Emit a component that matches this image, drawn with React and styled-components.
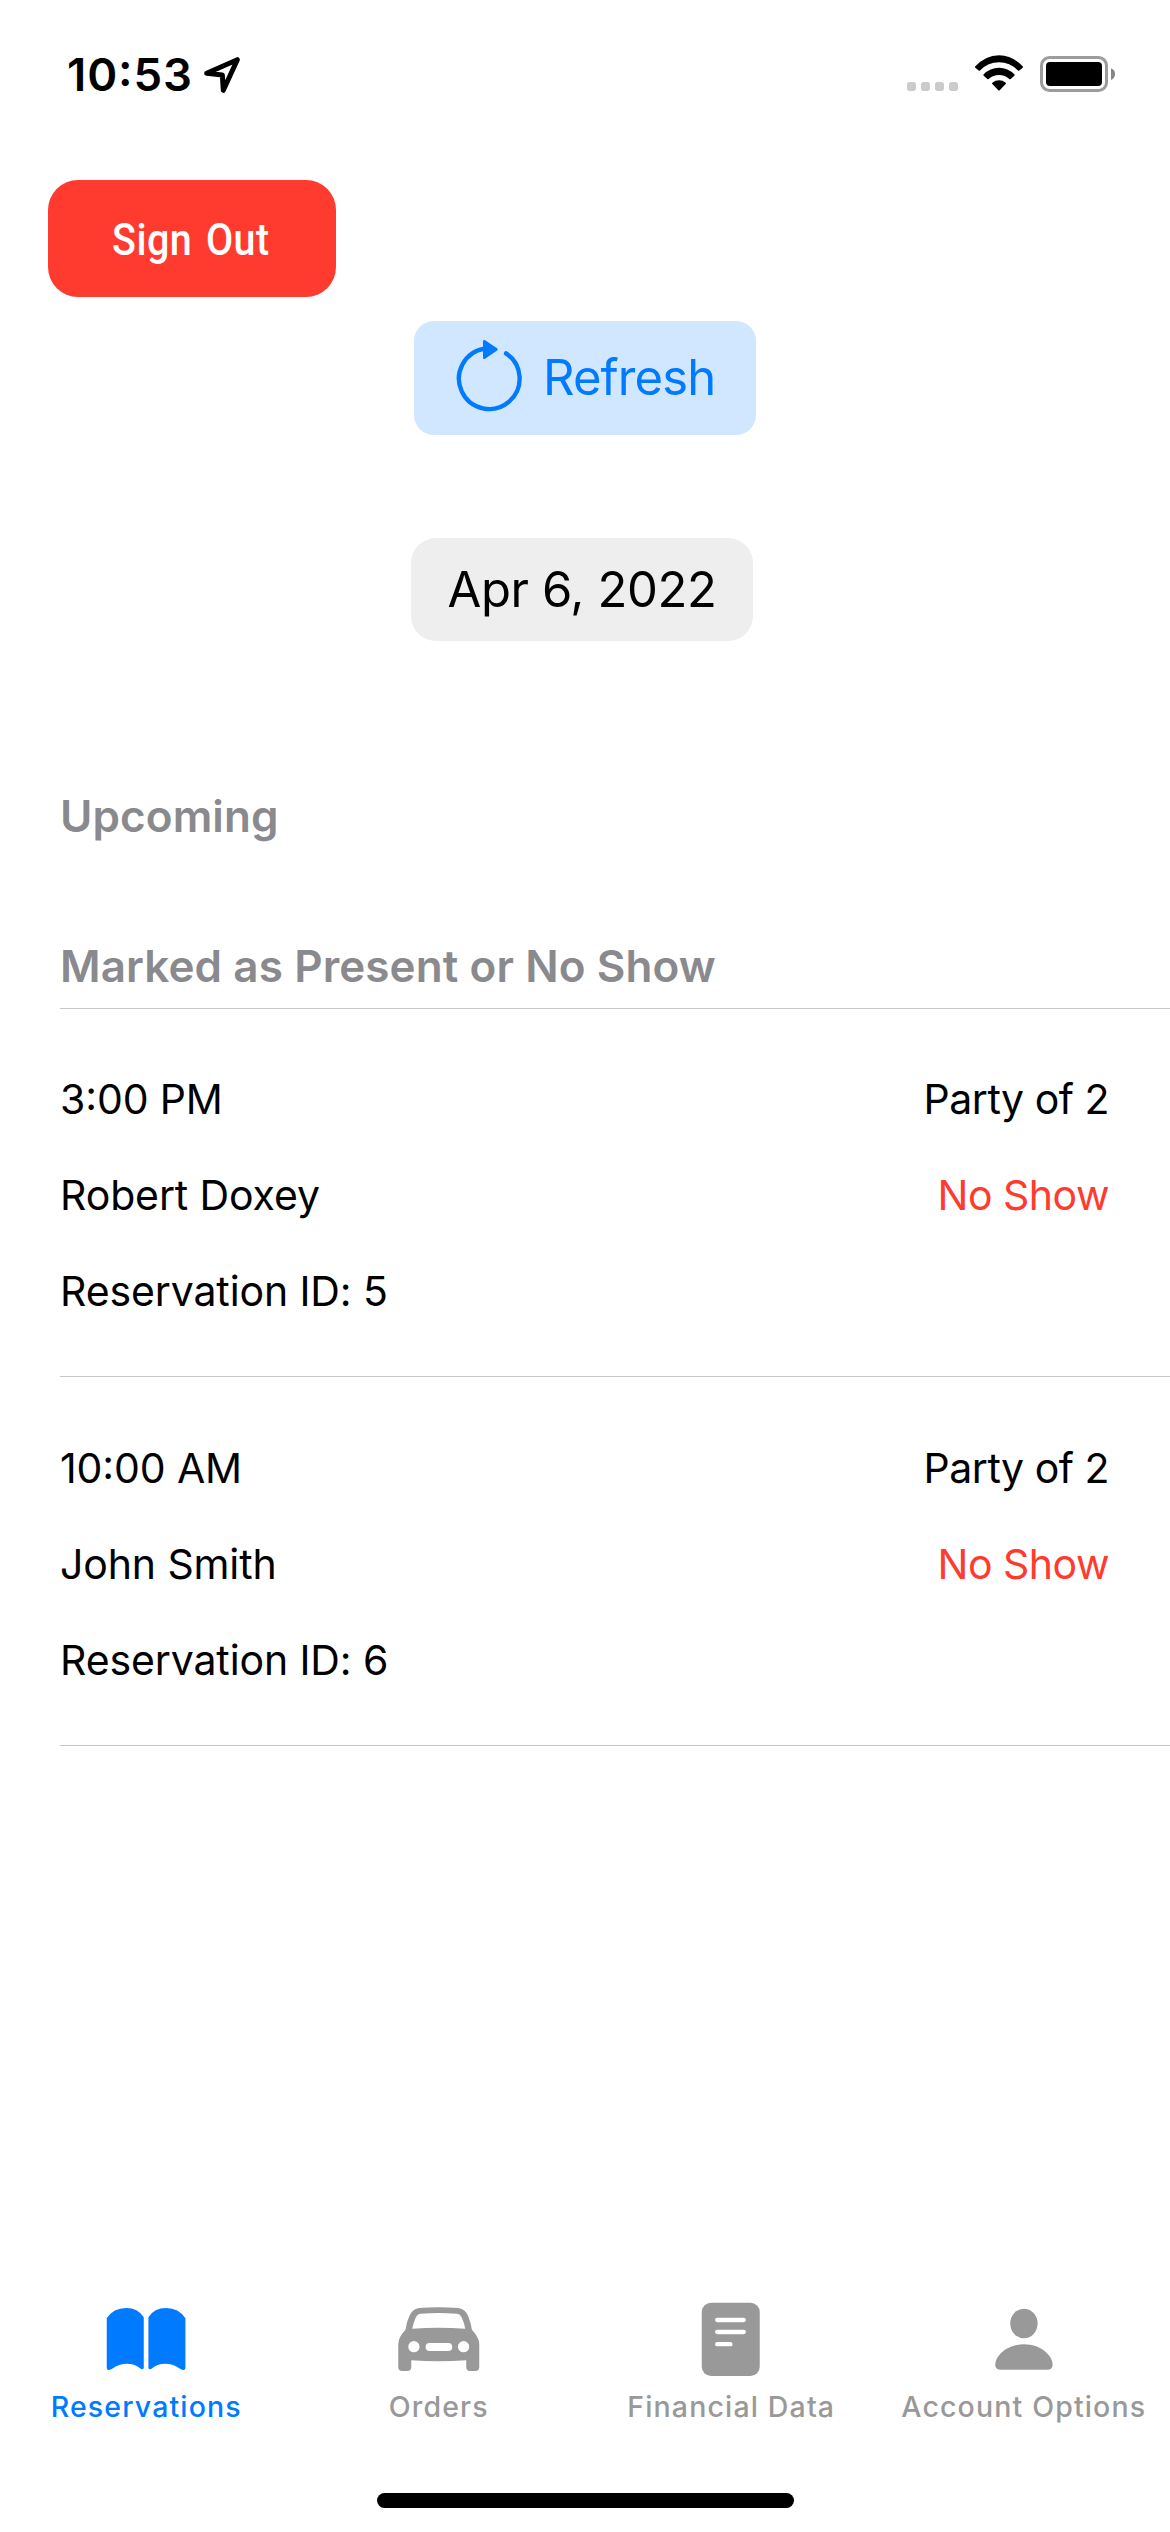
import React from "react";
import styled, { createGlobalStyle } from "styled-components";

const GlobalStyle = createGlobalStyle`
  * { box-sizing: border-box; }
  body {
    margin: 0;
    background: #ffffff;
    color: #000000;
    font-family: Inter, "Liberation Sans", sans-serif;
  }
`;

const Screen = styled.div`
  width: 1170px;
  height: 2532px;
  display: flex;
  flex-direction: column;
  background: #ffffff;
  overflow: hidden;
`;

const StatusBar = styled.header`
  height: 149px;
  padding: 0 54px 0 67px;
  display: flex;
  align-items: center;
  justify-content: space-between;
`;

const StatusGroup = styled.div`
  display: flex;
  align-items: center;
  gap: ${(p) => p.$gap}px;
`;

const Clock = styled.span`
  width: 127px;
  font-size: 45.5px;
  font-weight: 600;
  font-feature-settings: "case";
  line-height: 56px;
  letter-spacing: 0.9px;
  white-space: nowrap;
`;

const Glyph = styled.svg`
  display: block;
  flex: none;
  width: ${(p) => p.$w}px;
  height: ${(p) => p.$h}px;
`;

const Actions = styled.section`
  padding: 31px 0 0 48px;
  height: 172px;
`;

const SignOutButton = styled.button`
  width: 288px;
  height: 117px;
  padding: 2px 3px 0 0;
  border: 0;
  border-radius: 30px;
  background: #ff3b30;
  color: #ffffff;
  font-family: Roboto, sans-serif;
  font-size: 44.5px;
  font-weight: 500;
  line-height: 56px;
  letter-spacing: 0.5px;
  word-spacing: 4px;
`;

const CondensedLabel = styled.span`
  display: inline-block;
  transform: scaleX(0.887);
`;

const RefreshButton = styled.button`
  align-self: center;
  width: 342px;
  height: 114px;
  padding: 0 0 0 42px;
  display: flex;
  align-items: center;
  gap: 20px;
  border: 0;
  border-radius: 20px;
  background: #d1e7ff;
  color: #007aff;
  font-family: inherit;
  font-size: 49px;
  line-height: 60px;
  letter-spacing: -0.9px;
`;

const DateField = styled.div`
  align-self: center;
  width: 342px;
  height: 103px;
  margin: 103px 6px 0 0;
  display: flex;
  align-items: center;
  justify-content: center;
  border-radius: 25px;
  background: #eeeeef;
  font-size: 49px;
  line-height: 60px;
  letter-spacing: -0.4px;
`;

const List = styled.main`
  flex: 1;
  padding: 130px 0 0 60px;
`;

const SectionTitle = styled.h2`
  height: ${(p) => (p.$ruled ? 88 : 150)}px;
  margin: 0;
  padding-top: 15px;
  border-bottom: ${(p) => (p.$ruled ? "1px solid #c6c6c8" : "0")};
  color: #8a8a8e;
  font-size: 44px;
  font-weight: 600;
  line-height: 60px;
  letter-spacing: 0.1px;
`;

const Reservation = styled.article`
  padding: 43px 61px 37px 0;
  border-bottom: 1px solid #c6c6c8;
  display: flex;
  justify-content: space-between;
  font-size: 41px;
  line-height: 96px;

  &:first-of-type { padding-top: 42px; }
`;

const Details = styled.div`
  display: flex;
  flex-direction: column;
  align-items: ${(p) => (p.$end ? "flex-end" : "flex-start")};
  letter-spacing: ${(p) => (p.$end ? -0.5 : -0.12)}px;
`;

const Time = styled.span`
  font-feature-settings: "case";
`;

const Status = styled.span`
  color: #ff3b30;
`;

const TabBar = styled.nav`
  height: 193px;
  display: grid;
  grid-template-columns: repeat(4, 1fr);
`;

const Tab = styled.a`
  display: flex;
  flex-direction: column;
  align-items: center;
  gap: 11px;
  color: ${(p) => (p.$active ? "#007aff" : "#999999")};
  font-size: 28.5px;
  font-weight: 500;
  line-height: 36px;
  letter-spacing: 1.15px;
  white-space: nowrap;
`;

const HomeIndicator = styled.div`
  align-self: center;
  width: 417px;
  height: 15px;
  margin-bottom: 24px;
  border-radius: 8px;
  background: #000000;
`;

const LocationIcon = () => (
  <Glyph $w={37} $h={41} viewBox="492 72 111 123" fill="none" stroke="#000" strokeWidth="15" strokeLinejoin="round">
    <path d="M500 130 L592 89 L550 181 L547 135 Z" />
  </Glyph>
);

const CellularDots = () => (
  <Glyph $w={53} $h={41} viewBox="78 72 159 123" fill="#cbcbcb">
    {[81, 123, 165, 207].map((x) => (
      <rect key={x} x={x} y="156" width="27" height="27" rx="8" />
    ))}
  </Glyph>
);

const WifiIcon = () => (
  <Glyph $w={50} $h={41} viewBox="282 72 150 123" fill="#000">
    <path d="M286 109 Q316 76 357 75.500 Q398 76 428 109 Q430 111 428 113 L417 122 Q415 123 413 121 Q390 97 357 97 Q324 97 301 121 Q299 123 297 122 L286 113 Q284 111 286 109 Z" />
    <path d="M311 133 Q330 113 357 113 Q384 113 403 133 Q405 135 403 137 L392 147 Q390 149 388 147 Q375 135 357 135 Q339 135 326 147 Q324 149 322 147 L311 137 Q309 135 311 133 Z" />
    <path d="M337 158 Q346 151 357 151 Q368 151 377 158 Q379 160 377 162 L359 181 Q357 183 355 181 L337 162 Q335 160 337 158 Z" />
  </Glyph>
);

const BatteryIcon = () => (
  <Glyph $w={77} $h={41} viewBox="477 72 231 123">
    <rect x="484.500" y="82.500" width="195" height="99" rx="24" fill="none" stroke="#9c9c9c" strokeWidth="9" />
    <rect x="498" y="96" width="168" height="72" rx="12" fill="#000" />
    <path d="M693 115 Q705 120 705 132 Q705 144 693 150 Z" fill="#858585" />
  </Glyph>
);

const RefreshIcon = () => (
  <Glyph $w={67} $h={80} viewBox="168 84 201 240">
    <path d="M318 130 A91 91 0 1 1 254 116" fill="none" stroke="#007aff" strokeWidth="13" strokeLinecap="round" />
    <path d="M253 94 L289 118 L253 143 Z" fill="#007aff" stroke="#007aff" strokeWidth="8" strokeLinejoin="round" />
  </Glyph>
);

const BookIcon = () => (
  <Glyph $w={90} $h={78} viewBox="213.75 60 270 234" fill="currentColor">
    <path d="M231 115 Q251 84 289 84 Q325 84 342 112 L342 263 Q341 269 334 267 Q316 251 292 251 Q267 251 246 267 Q232 274 231 264 Z" />
    <path d="M356 112 Q373 84 409 84 Q447 84 467 115 L467 264 Q466 274 452 267 Q431 251 406 251 Q382 251 364 267 Q357 269 356 263 Z" />
  </Glyph>
);

const CarIcon = () => (
  <Glyph $w={90} $h={78} viewBox="161.25 60 270 234" fill="currentColor">
    <path
      fillRule="evenodd"
      d="M236 84 Q295 79 355 84 Q375 87 384 109 Q391 127 395 149 Q417 173 417 192 L417 261 Q417 273 405 273 L390 273 Q378 273 378 261 L378 241 Q295 247 213 241 L213 261 Q213 273 201 273 L186 273 Q174 273 174 261 L174 192 Q175 170 196 149 Q199 127 207 109 Q216 87 236 84 Z
      M242 101 Q231 102 227 112 Q219 129 216 146 Q295 141 375 146 Q372 129 364 112 Q360 102 349 101 Q295 97 242 101 Z
      M204 200 A17 17 0 1 0 238 200 A17 17 0 1 0 204 200 Z
      M353 200 A17 17 0 1 0 387 200 A17 17 0 1 0 353 200 Z
      M268 189 L324 189 A12 12 0 0 1 324 213 L268 213 A12 12 0 0 1 268 189 Z"
    />
  </Glyph>
);

const DocumentIcon = () => (
  <Glyph $w={90} $h={78} viewBox="258.75 60 270 234">
    <rect x="306" y="68" width="174" height="220" rx="28" fill="currentColor" />
    <path d="M352.500 120 H432 M352.500 156 H432 M352.500 192.500 H392" stroke="#fff" strokeWidth="13" strokeLinecap="round" />
  </Glyph>
);

const PersonIcon = () => (
  <Glyph $w={90} $h={78} viewBox="296.25 60 270 234" fill="currentColor">
    <ellipse cx="431" cy="130.500" rx="41" ry="44.500" />
    <path d="M362 269.500 Q345 269 345 255 C345 226 381 193 431 193 C481 193 517 226 517 255 Q517 269 500 269.500 Z" />
  </Glyph>
);

const reservations = [
  { id: 5, time: "3:00 PM", name: "Robert Doxey", party: 2, status: "No Show" },
  { id: 6, time: "10:00 AM", name: "John Smith", party: 2, status: "No Show" },
];

const tabs = [
  { label: "Reservations", Icon: BookIcon, active: true },
  { label: "Orders", Icon: CarIcon },
  { label: "Financial Data", Icon: DocumentIcon },
  { label: "Account Options", Icon: PersonIcon },
];

export default function App() {
  return (
    <Screen>
      <GlobalStyle />
      <StatusBar>
        <StatusGroup $gap={10}>
          <Clock>10:53</Clock>
          <LocationIcon />
        </StatusGroup>
        <StatusGroup $gap={15}>
          <CellularDots />
          <WifiIcon />
          <BatteryIcon />
        </StatusGroup>
      </StatusBar>
      <Actions>
        <SignOutButton>
          <CondensedLabel>Sign Out</CondensedLabel>
        </SignOutButton>
      </Actions>
      <RefreshButton>
        <RefreshIcon />
        <span>Refresh</span>
      </RefreshButton>
      <DateField>Apr 6, 2022</DateField>
      <List>
        <SectionTitle>Upcoming</SectionTitle>
        <SectionTitle $ruled>Marked as Present or No Show</SectionTitle>
        {reservations.map((r) => (
          <Reservation key={r.id}>
            <Details>
              <Time>{r.time}</Time>
              <span>{r.name}</span>
              <span>Reservation ID: {r.id}</span>
            </Details>
            <Details $end>
              <span>Party of {r.party}</span>
              <Status>{r.status}</Status>
            </Details>
          </Reservation>
        ))}
      </List>
      <TabBar>
        {tabs.map(({ label, Icon, active }) => (
          <Tab key={label} $active={active}>
            <Icon />
            <span>{label}</span>
          </Tab>
        ))}
      </TabBar>
      <HomeIndicator />
    </Screen>
  );
}
